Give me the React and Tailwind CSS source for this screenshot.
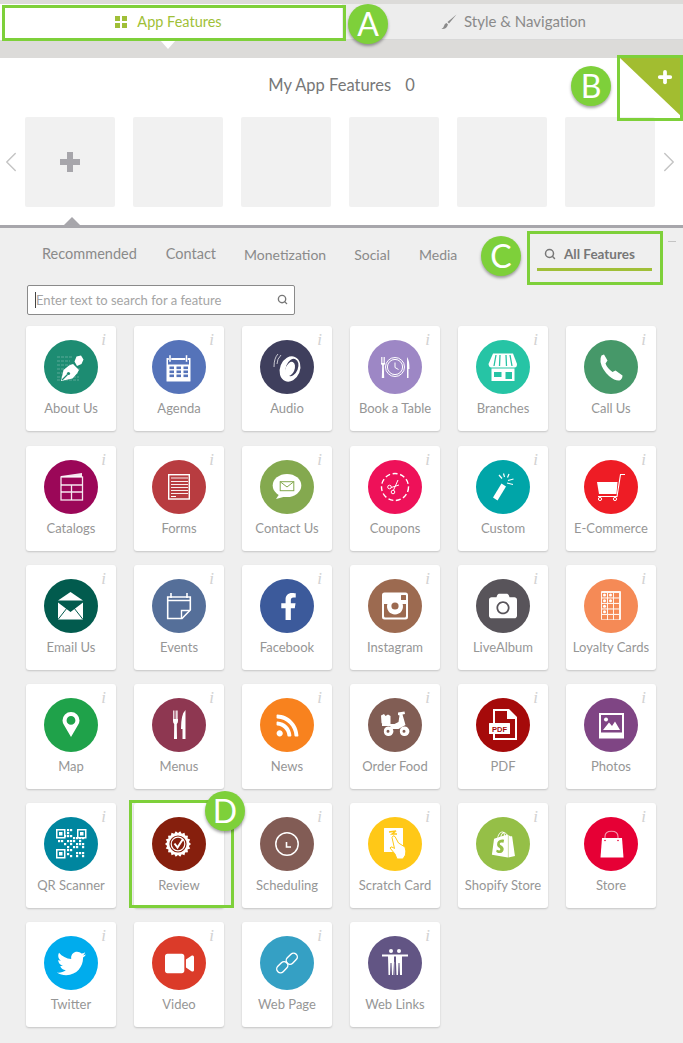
import React from "react";
import { Search, ChevronLeft, ChevronRight, Plus } from "lucide-react";
import { FaFacebookF, FaTwitter, FaRss, FaShopify, FaVideo, FaCamera } from "react-icons/fa";

const Svg = ({ children }) => (
  <svg viewBox="0 0 54 54" className="absolute inset-0 h-full w-full" fill="white">
    {children}
  </svg>
);

// small helpers for the icons which are mostly repeated bits
const sealPoints = () => {
  const pts = [];
  for (let i = 0; i < 36; i++) {
    const r = i % 2 ? 11 : 13;
    const a = (i * Math.PI) / 18;
    pts.push(`${26 + r * Math.cos(a)},${27 + r * Math.sin(a)}`);
  }
  return pts.join(" ");
};

const qrCells = [
  [23, 12], [26, 12], [23, 15], [20, 18], [23, 18], [26, 18], [29, 20], [32, 20], [35, 20], [38, 20], [14, 23], [17, 23], [23, 23], [26, 23], [29, 23], [35, 23],
  [20, 26], [26, 26], [32, 26], [35, 26], [38, 26], [23, 29], [29, 29], [32, 29], [38, 29], [23, 32], [26, 32], [32, 35], [35, 35], [38, 35], [23, 36], [26, 38], [32, 38], [38, 38],
];

const Finder = ({ x, y }) => (
  <g>
    <rect x={x} y={y} width="9.5" height="9.5" />
    <rect x={x + 1.5} y={y + 1.5} width="6.5" height="6.5" fill="#00869f" />
    <rect x={x + 3} y={y + 3} width="3.5" height="3.5" />
  </g>
);

const features = [
  { name: "About Us", color: "#1d8c72", icon: (
    <Svg>
      <g stroke="white" strokeOpacity=".35" strokeWidth=".8" strokeDasharray="3 1">
        <path d="M13 17H28M13 21H26M13 25H30M13 29H36M13 33H34M13 37H35M13 40H35" />
      </g>
      <path d="M17 41L19.5 30L25 25.5L29 24L35 30L33 33.5L28.5 38.5ZM30.5 21.5L32.5 16.5L37 15.5L39.5 19.5L37.5 24L33 26Z" />
      <path d="M18 40L23.5 34.5" stroke="#1d8c72" strokeWidth="1.2" />
      <circle cx="24.5" cy="33.5" r="1.6" fill="#1d8c72" />
    </Svg>
  ) },
  { name: "Agenda", color: "#5573b9", icon: (
    <Svg>
      <rect x="14.5" y="18" width="24" height="23.5" rx=".5" />
      <rect x="16" y="20" width="21" height="4.5" fill="#5573b9" />
      <rect x="17" y="15" width="2" height="7" stroke="#5573b9" strokeWidth=".5" />
      <rect x="33.5" y="15" width="2" height="7" stroke="#5573b9" strokeWidth=".5" />
      {[26.5, 30.5, 34.5].map((y) => [17.5, 24.5, 31.5].map((x) => (
        <rect key={x + "-" + y} x={x} y={y} width="4.5" height="2.6" fill="#5573b9" />
      )))}
    </Svg>
  ) },
  { name: "Audio", color: "#3f3f5d", icon: (
    <Svg>
      <ellipse cx="30" cy="29" rx="10" ry="13" transform="rotate(22 30 29)" />
      <ellipse cx="32" cy="27.5" rx="6" ry="9" transform="rotate(22 32 27.5)" fill="#3f3f5d" />
      <ellipse cx="30" cy="29" rx="4.5" ry="7.5" transform="rotate(22 30 29)" />
      <path d="M17 24Q17 19 21 15M14 27Q14 18 18 14" fill="none" stroke="white" strokeWidth=".9" strokeOpacity=".8" />
    </Svg>
  ) },
  { name: "Book a Table", color: "#9d87c5", icon: (
    <Svg>
      <path d="M13 17V24L14.2 25.5L13.8 38H16.2L15.8 25.5L17 24V17H16.2V23H15.4V17H14.6V23H13.8V17Z" />
      <circle cx="27" cy="27" r="9.5" fill="none" stroke="white" strokeWidth="1" />
      <circle cx="27" cy="27" r="7.6" fill="none" stroke="white" strokeWidth="1" />
      <path d="M27 22.5V27.5L30.5 29.5" fill="none" stroke="white" strokeWidth="1" />
      <path d="M39 17Q41.5 20 41.5 29H40.5V38H39Z" />
    </Svg>
  ) },
  { name: "Branches", color: "#26c4a5", icon: (
    <Svg>
      <path d="M17 13.5H37L41 24Q41 27.5 38.5 27.5H15.5Q13 27.5 12.5 24Z" />
      <path d="M20 15L18 26M24 15L23.5 26M30 15L30.5 26M34 15L36 26" stroke="#26c4a5" strokeWidth="1.3" />
      <path d="M15.5 28.5H38.5V41H15.5Z" />
      <rect x="18" y="32" width="7.5" height="5" fill="#26c4a5" />
      <rect x="29.5" y="32" width="6.5" height="7" fill="#26c4a5" />
    </Svg>
  ) },
  { name: "Call Us", color: "#469869", icon: (
    <Svg>
      <path d="M17.5 15.5L20 14.5L23.5 20.5L21.5 23.5Q23 28 28.5 32L31.5 30.5L38.5 35.5Q38.5 39 35.5 40.5Q31 41 25 36Q18 29.5 16.5 22Q16 18 17.5 15.5Z" />
    </Svg>
  ) },
  { name: "Catalogs", color: "#9b0758", icon: (
    <Svg>
      <path d="M17 16L38 13V17L17 17Z" opacity=".9" />
      <g fill="none" stroke="white" strokeOpacity=".9" strokeWidth="1.3">
        <rect x="17" y="17" width="21.5" height="23" />
        <path d="M17 25H38.5M17 32H38.5M27.5 25V40" />
      </g>
    </Svg>
  ) },
  { name: "Forms", color: "#b83c40", icon: (
    <Svg>
      <rect x="16.7" y="14.7" width="20.6" height="24.3" fill="none" stroke="white" strokeWidth="1.4" />
      <path d="M19 18H36M19 21.5H36M19 24.5H36M19 27.5H36M19 30.5H36M19 33.5H36" stroke="white" strokeWidth="1.1" strokeOpacity=".9" />
      <path d="M19 36.5H24" stroke="white" strokeWidth="1.1" />
    </Svg>
  ) },
  { name: "Contact Us", color: "#84a94f", icon: (
    <Svg>
      <ellipse cx="27" cy="25.5" rx="14.3" ry="11.5" />
      <path d="M20 33L16 39L27 36Z" />
      <rect x="20.2" y="21.7" width="13.6" height="9" fill="none" stroke="#84a94f" strokeWidth="1" />
      <path d="M20.2 21.7L27 27L33.8 21.7" fill="none" stroke="#84a94f" strokeWidth="1" />
    </Svg>
  ) },
  { name: "Coupons", color: "#ee1159", icon: (
    <Svg>
      <circle cx="27" cy="27" r="13.5" fill="none" stroke="white" strokeWidth="1.4" strokeDasharray="5 2.6" />
      <g fill="none" stroke="white" strokeWidth="1">
        <circle cx="21.5" cy="27" r="1.8" />
        <circle cx="25" cy="32" r="1.8" />
        <path d="M23.2 27.5L31 25M25.5 30.2L30 20" />
      </g>
    </Svg>
  ) },
  { name: "Custom", color: "#00a5a8", icon: (
    <Svg>
      <path d="M25.5 23.5L30 26.5L21.5 40.5L17 37.5Z" />
      <path d="M27.5 13.5L28.5 17M33 14L31.5 17.5M32 20.5L37.5 19M31 23L37 24.5M23 15L26 18.5" stroke="white" strokeWidth="1.2" />
    </Svg>
  ) },
  { name: "E-Commerce", color: "#ee1c25", icon: (
    <Svg>
      <path d="M13 22H33.5L32.5 34H15Z" />
      <path d="M41 14.5H36.5L33 36.5H14" fill="none" stroke="white" strokeWidth="1.1" />
      <circle cx="16" cy="39" r="1.6" fill="none" stroke="white" />
      <circle cx="31" cy="39" r="1.6" fill="none" stroke="white" />
    </Svg>
  ) },
  { name: "Email Us", color: "#025b4e", icon: (
    <Svg>
      <path d="M26.5 13L39 21.5H14Z" />
      <path d="M14 23.5L26.5 33L39 23.5V40.5H14Z" />
      <path d="M14 40.5L23 29M39 40.5L30 29" stroke="#025b4e" strokeWidth="1" />
    </Svg>
  ) },
  { name: "Events", color: "#556f99", icon: (
    <Svg>
      <path d="M15.7 18H38.3V31L30 39.5H15.7Z" fill="none" stroke="white" strokeWidth="1.6" />
      <path d="M15.7 21.5H38.3" stroke="white" strokeWidth="1.4" />
      <path d="M19 14V19M35 14V19" stroke="white" strokeWidth="1.6" />
      <path d="M29.5 39.5V31.5H38" fill="none" stroke="white" strokeWidth="1.4" />
    </Svg>
  ) },
  { name: "Facebook", color: "#3c5a9b", icon: <FaFacebookF size={27} color="white" className="translate-x-[1px]" /> },
  { name: "Instagram", color: "#9c6a50", icon: (
    <Svg>
      <path fillRule="evenodd" d="M16.5 13.5H37.5Q40 13.5 40 16V38Q40 40.5 37.5 40.5H16.5Q14 40.5 14 38V16Q14 13.5 16.5 13.5ZM16 25V37Q16 38.5 17.5 38.5H36.5Q38 38.5 38 37V25H34.6A8 8 0 1 1 19.4 25Z" />
      <circle cx="27" cy="27" r="5.7" />
      <circle cx="27" cy="27" r="3.6" fill="#9c6a50" />
      <rect x="33" y="16" width="5" height="5" rx=".6" fill="#9c6a50" />
    </Svg>
  ) },
  { name: "LiveAlbum", color: "#58545a", icon: <FaCamera size={28} color="white" /> },
  { name: "Loyalty Cards", color: "#f58a56", icon: (
    <Svg>
      <rect x="17" y="12" width="20" height="29" rx="1" fill="white" fillOpacity=".9" />
      {[14, 19.5, 25, 30.5, 36].map((y) => [18, 24, 30].map((x) => (
        <rect key={x + "-" + y} x={x} y={y} width="5" height="4.4" fill="#f58a56" />
      )))}
      {[16, 21.7, 27.2, 32.7].map((y) => <circle key={y} cx="20.5" cy={y} r="1.5" />)}
      <circle cx="26.5" cy="16" r="1.5" />
      <circle cx="26.5" cy="21.7" r="1.5" />
    </Svg>
  ) },
  { name: "Map", color: "#1fa24a", icon: (
    <Svg>
      <path fillRule="evenodd" d="M27 39L20 27Q18.5 24.5 18.5 22.5A8.5 8.5 0 0 1 35.5 22.5Q35.5 24.5 34 27ZM27 18A4.4 4.4 0 1 0 27 26.8A4.4 4.4 0 0 0 27 18Z" />
    </Svg>
  ) },
  { name: "Menus", color: "#8e3751", icon: (
    <Svg>
      <path d="M21 12.5H21.8V21H22.6V12.5H23.4V21H24.2V12.5H25V21H25.4V12.5H26V23Q26 25 24.8 26L25 41H22L22.2 26Q21 25 21 23Z" />
      <path d="M33.5 12V41H30.5V31H29Q29 16 33.5 12Z" />
    </Svg>
  ) },
  { name: "News", color: "#f8821e", icon: <FaRss size={25} color="white" /> },
  { name: "Order Food", color: "#815d54", icon: (
    <Svg>
      <path d="M13 17.5L16 16L17.5 18L20 16.5L22.5 18V26.5L15.5 27.5L13.5 25Z" />
      <path d="M30 14.5L36.5 13.5L37 16L34.5 16.5L37.5 27L34 29L30.5 31H24L22 28H14V26H26.5L30.5 24L31.5 17.5L30 17Z" />
      <path fillRule="evenodd" d="M20 28.5A4.8 4.8 0 1 1 19.9 38A4.8 4.8 0 0 1 20 28.5ZM20 31.8A1.5 1.5 0 1 0 20 34.8A1.5 1.5 0 0 0 20 31.8Z" />
      <path fillRule="evenodd" d="M36 28.5A4.8 4.8 0 1 1 35.9 38A4.8 4.8 0 0 1 36 28.5ZM36 31.8A1.5 1.5 0 1 0 36 34.8A1.5 1.5 0 0 0 36 31.8Z" />
    </Svg>
  ) },
  { name: "PDF", color: "#a50a0a", icon: (
    <Svg>
      <path d="M17 11H33L41 19V42H17V36H19V40H39V21H31V13H19V25H17Z" />
      <path d="M33.5 14V19H38.5Z" />
      <rect x="13" y="25" width="21" height="11" rx=".5" />
      <text x="23.5" y="33.5" textAnchor="middle" fontSize="7.5" fontWeight="900" fontFamily="Liberation Sans, sans-serif" fill="#a50a0a">PDF</text>
    </Svg>
  ) },
  { name: "Photos", color: "#7f4584", icon: (
    <Svg>
      <path fillRule="evenodd" d="M15 15H40V40.5H15ZM17 17V34.5H38V17Z" />
      <circle cx="22" cy="21.5" r="2" />
      <path d="M19 32L25 24.5L28 28L31 23.5L36 32Z" />
    </Svg>
  ) },
  { name: "QR Scanner", color: "#00869f", icon: (
    <Svg>
      <Finder x={12} y={12} />
      <Finder x={33} y={12} />
      <Finder x={12} y={32} />
      {qrCells.map(([x, y]) => <rect key={x + "-" + y} x={x} y={y} width="2.2" height="2.2" />)}
    </Svg>
  ) },
  { name: "Review", color: "#861f0d", icon: (
    <Svg>
      <polygon points={sealPoints()} />
      <circle cx="26" cy="27" r="8.6" fill="#861f0d" />
      <circle cx="26" cy="27" r="6.8" fill="none" stroke="white" strokeWidth="1.2" />
      <path d="M22.5 26.5L25.5 30.5L31 22" fill="none" stroke="white" strokeWidth="2" />
    </Svg>
  ) },
  { name: "Scheduling", color: "#825c55", icon: (
    <Svg>
      <circle cx="27" cy="27" r="11.2" fill="none" stroke="white" strokeWidth="1.5" />
      <path d="M26.5 25V30H31" fill="none" stroke="white" strokeWidth="1.6" />
    </Svg>
  ) },
  { name: "Scratch Card", color: "#ffc817", icon: (
    <Svg>
      <rect x="16" y="11" width="19" height="24" rx=".5" />
      <path d="M21 15L28 14L24 17L29 17" fill="none" stroke="#ffc817" strokeWidth="1.4" />
      <path d="M24 20.5Q25 17.5 27 19.5L30.5 26L37 30Q38.5 34 37.5 38L35 42H29L27 37L22 31Q22.5 29 25 30.5L26.5 31.5Z" stroke="#ffc817" strokeWidth="1" />
    </Svg>
  ) },
  { name: "Shopify Store", color: "#95bf47", icon: <FaShopify size={27} color="white" /> },
  { name: "Store", color: "#e60035", icon: (
    <Svg>
      <path d="M18 21H38L39.5 40.5H16.5Z" />
      <path d="M21 24V19.5Q21 14.2 27.5 14.2Q34 14.2 34 19.5V24" fill="none" stroke="white" strokeOpacity=".6" strokeWidth="1.1" />
      <circle cx="21" cy="23.5" r=".8" fill="#e60035" />
      <circle cx="34" cy="23.5" r=".8" fill="#e60035" />
    </Svg>
  ) },
  { name: "Twitter", color: "#00aced", icon: <FaTwitter size={29} color="white" /> },
  { name: "Video", color: "#db3b29", icon: <FaVideo size={29} color="white" /> },
  { name: "Web Page", color: "#35a0c4", icon: (
    <Svg>
      <g fill="none" stroke="white" strokeWidth="1.4">
        <rect x="16" y="27.5" width="12.5" height="7.5" rx="3.7" transform="rotate(-45 22.2 31.2)" />
        <rect x="25.5" y="19" width="12.5" height="7.5" rx="3.7" transform="rotate(-45 31.7 22.7)" />
      </g>
    </Svg>
  ) },
  { name: "Web Links", color: "#625584", icon: (
    <Svg>
      <circle cx="23" cy="15" r="2" />
      <circle cx="31" cy="15" r="2" />
      <rect x="14" y="18.5" width="26" height="2" />
      <path d="M20 20H26V26L25 39H24L23.5 27H22.5L22 39H20.5Z" />
      <path d="M28 20H34V39H32L31.5 27H30.5L30 39H28.5L28 27Z" />
      <path d="M26 26V39" stroke="white" strokeOpacity=".5" />
    </Svg>
  ) },
];

const FeatureCard = ({ name, color, icon }) => (
  <div className="relative flex h-[105px] w-[90px] flex-col items-center rounded-[3px] bg-white pt-3.5 shadow-[0_1px_2px_rgba(0,0,0,0.18)]">
    <span className="absolute right-[10px] top-[3px] font-['Liberation_Serif',serif] text-[17px] italic leading-[22px] text-[#d2d2d2]">i</span>
    <div className="relative flex h-[54px] w-[54px] items-center justify-center overflow-hidden rounded-full" style={{ backgroundColor: color }}>
      {icon}
    </div>
    <span className="mt-[6px] whitespace-nowrap text-[13px] leading-[16px] text-[#969696]">{name}</span>
  </div>
);

const Badge = ({ letter, className }) => (
  <div className={`absolute flex h-10 w-10 items-center justify-center rounded-full bg-[#7ed03a] text-[32px] leading-none text-white shadow-[0_2px_3px_rgba(0,0,0,0.35)] font-['Lato',sans-serif] ${className}`}>
    {letter}
  </div>
);

export default function App() {
  return (
    <div className="relative h-[1043px] w-[683px] overflow-hidden bg-[#efefef] font-['Lato',sans-serif]">
      <div className="h-1 bg-[#dcdbd9]" />

      {/* top tabs */}
      <div className="flex h-9">
        <div className="relative flex w-[342px] items-center justify-center gap-[10px] bg-white pr-[5px] text-[14.5px] text-[#a0bf38]">
          <span className="grid grid-cols-2 gap-[2px]">
            <i className="h-[5px] w-[5px] bg-[#a0bf38]" />
            <i className="h-[5px] w-[5px] bg-[#a0bf38]" />
            <i className="h-[5px] w-[5px] bg-[#a0bf38]" />
            <i className="h-[5px] w-[5px] bg-[#a0bf38]" />
          </span>
          App Features
          <span className="absolute left-[160px] top-full h-0 w-0 border-x-[8px] border-t-[9px] border-x-transparent border-t-white" />
        </div>
        <div className="flex flex-1 items-center justify-center gap-[7px] border-b border-[#d8d8d8] bg-[#ededed] pl-[2px] text-[15px] text-[#8a8a8a]">
          <svg viewBox="0 0 16 16" className="h-4 w-4" fill="#8a8a8a">
            <path d="M15.5 0.5L6.5 8L8 9.5Z" />
            <path d="M5.5 9Q3.5 9.5 3 12Q2.5 14 0.5 15Q5.5 15.5 7 10.5Z" />
          </svg>
          Style &amp; Navigation
        </div>
      </div>
      <div className="h-[18px] bg-[#dcdbd9]" />

      {/* my app features */}
      <div className="relative h-[167px] bg-white">
        <div className="flex h-[59px] items-center justify-center gap-[14px] pb-[4px] text-[16.5px] text-[#777]">
          <span>My App Features</span>
          <span>0</span>
        </div>
        <div className="flex items-center">
          <div className="flex w-[25px] shrink-0 justify-center pr-[3px]">
            <ChevronLeft size={34} strokeWidth={1} className="shrink-0 text-[#c4c4c4]" />
          </div>
          <div className="flex shrink-0 gap-[18px]">
            <div className="flex h-[90px] w-[90px] items-center justify-center rounded-[2px] bg-[#f1f1f1]">
              <span className="relative h-[20px] w-[20px]">
                <span className="absolute left-[7px] top-0 h-[20px] w-[6px] bg-[#a7a6ab]" />
                <span className="absolute left-0 top-[7px] h-[6px] w-[20px] bg-[#a7a6ab]" />
              </span>
            </div>
            {[1, 2, 3, 4, 5].map((n) => (
              <div key={n} className="h-[90px] w-[90px] rounded-[2px] bg-[#f1f1f1]" />
            ))}
          </div>
          <div className="flex w-[28px] shrink-0 justify-center">
            <ChevronRight size={34} strokeWidth={1} className="shrink-0 text-[#c4c4c4]" />
          </div>
        </div>
        <span className="absolute bottom-0 left-[64px] h-0 w-0 border-x-[8px] border-b-[8px] border-x-transparent border-b-[#a7a6ab]" />
        {/* green corner */}
        <div className="absolute right-0 top-0 h-[60px] w-[63px] bg-[#a2bd30] [clip-path:polygon(0_0,100%_0,100%_100%)]" />
        <Plus size={18} strokeWidth={5} className="absolute right-[9px] top-[10px] text-white" />
      </div>
      <div className="h-[3px] bg-[#a7a6ab]" />

      {/* category tabs */}
      <div className="flex h-[57px] items-center gap-[29px] pb-[5px] pl-[42px] pr-[31px] text-[14.5px] text-[#8a8a8a]">
        <span>Recommended</span>
        <span>Contact</span>
        <span className="-ml-[1px] text-[14px]">Monetization</span>
        <span className="-ml-[1px] text-[14px]">Social</span>
        <span className="text-[14px]">Media</span>
        <div className="ml-auto flex h-[34px] w-[115px] items-center gap-[8px] border-b-[3px] border-[#a0bf38] pl-[7px] pt-[3px] font-bold text-[#777]">
          <Search size={12} strokeWidth={3} />
          <span className="text-[13.5px]">All Features</span>
        </div>
      </div>

      {/* search */}
      <div className="px-[27px]">
        <div className="flex h-[30px] w-[268px] items-center justify-between rounded-[2px] border border-[#8a8a8a] bg-white pb-[1px] pl-[7px] pr-[6px]">
          <span className="border-l border-[#444] text-[13px] leading-[16px] text-[#a5a5a5]">Enter text to search for a feature</span>
          <Search size={11} strokeWidth={3} className="text-[#777]" />
        </div>
      </div>

      {/* feature grid */}
      <div className="mt-[11px] grid grid-cols-[repeat(6,90px)] grid-rows-[106px_repeat(5,105px)] gap-x-[18px] gap-y-[14px] px-[26px]">
        {features.map((f) => (
          <FeatureCard key={f.name} {...f} />
        ))}
      </div>

      <span className="absolute left-[668px] top-[241px] h-px w-[8px] bg-[#c4c4c4]" />

      {/* tutorial annotations */}
      <div className="absolute left-[2px] top-[5px] h-[36px] w-[344px] border-[3px] border-[#7ed03a]" />
      <div className="absolute left-[617px] top-[55px] h-[66px] w-[66px] border-[3px] border-[#7ed03a]" />
      <div className="absolute left-[527px] top-[231px] h-[54px] w-[136px] border-[3px] border-[#7ed03a]" />
      <div className="absolute left-[129px] top-[800px] h-[108px] w-[105px] border-[3px] border-[#7ed03a]" />
      <Badge letter="A" className="left-[348px] top-[4px]" />
      <Badge letter="B" className="left-[571px] top-[66px]" />
      <Badge letter="C" className="left-[481px] top-[236px]" />
      <Badge letter="D" className="left-[205px] top-[791px]" />
    </div>
  );
}
